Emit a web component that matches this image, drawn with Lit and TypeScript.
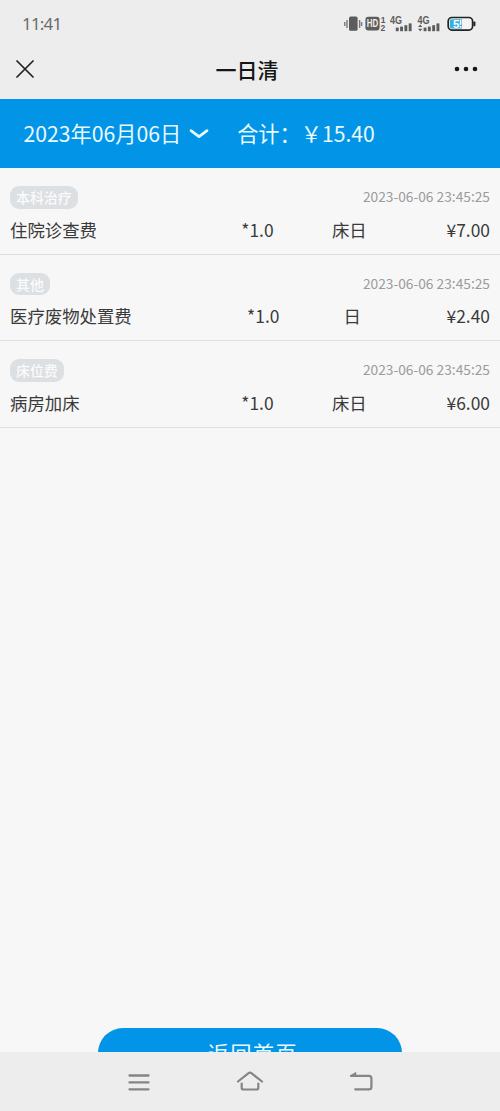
import { LitElement, html, css, svg } from "lit";
import { customElement, property } from "lit/decorators.js";

interface Charge {
  category: string;
  time: string;
  name: string;
  quantity: string;
  unit: string;
  price: string;
}

const CHARGES: Charge[] = [
  { category: "本科治疗", time: "2023-06-06 23:45:25", name: "住院诊查费", quantity: "*1.0", unit: "床日", price: "¥7.00" },
  { category: "其他", time: "2023-06-06 23:45:25", name: "医疗废物处置费", quantity: "*1.0", unit: "日", price: "¥2.40" },
  { category: "床位费", time: "2023-06-06 23:45:25", name: "病房加床", quantity: "*1.0", unit: "床日", price: "¥6.00" },
];

@customElement("status-bar")
class StatusBar extends LitElement {
  static styles = css`
    :host {
      display: flex;
      justify-content: space-between;
      align-items: center;
      height: 48px;
      padding: 0 22px;
      box-sizing: border-box;
      color: #6a6a6a;
    }
    .clock {
      font: 400 17px/24px "Noto Sans", "Noto Sans CJK SC", sans-serif;
      letter-spacing: -0.8px;
    }
    .icons {
      display: block;
      margin-right: 1px;
    }
    .label {
      font-family: "Liberation Sans", sans-serif;
      font-weight: 700;
    }
  `;

  private bars(x: number) {
    return svg`
      <rect x=${x} y="17.6" width="2.9" height="3.6" />
      <rect x=${x + 4.3} y="16.6" width="2.9" height="4.6" />
      <rect x=${x + 8.6} y="15.2" width="2.9" height="6" />
      <rect x=${x + 12.9} y="13.4" width="2.9" height="7.8" />`;
  }

  render() {
    return html`
      <span class="clock">11:41</span>
      <svg class="icons" width="133" height="28" viewBox="0 0 133 28" fill="#5c5c5c">
        <rect x="5" y="6.600" width="8.600" height="14.200" rx="1.600" />
        <path d="M3 10v8M15.600 10v8M.8 12v4M17.600 12v4" stroke="#777" stroke-width="1.400" fill="none" />
        <rect x="21.400" y="6.800" width="14.200" height="13.800" rx="3" />
        <text class="label" x="22.800" y="17.400" font-size="10.500" textLength="11.400" lengthAdjust="spacingAndGlyphs" fill="#eee">HD</text>
        <text class="label" x="36.800" y="12.600" font-size="8.500">1</text>
        <text class="label" x="36.400" y="21" font-size="8.500">2</text>
        <text class="label" x="46" y="13.600" font-size="10" textLength="12" lengthAdjust="spacingAndGlyphs">4G</text>
        ${this.bars(51.8)}
        <text class="label" x="73.600" y="13.600" font-size="10" textLength="12" lengthAdjust="spacingAndGlyphs">4G</text>
        <path d="M74 17l2.200-2.400 2.200 2.400zM74 18.800l2.200 2.400 2.200-2.400z" />
        ${this.bars(79.6)}
        <rect x="104.200" y="7.500" width="24.400" height="12.600" rx="3.800" fill="#f4f4f4" stroke="#222" stroke-width="1.700" />
        <path d="M107.500 9.200H118v9.200h-10.500a1.600 1.600 0 0 1-1.600-1.600v-6a1.600 1.600 0 0 1 1.600-1.600z" fill="#35aee2" />
        <rect x="129.400" y="11.400" width="2" height="4.800" rx=".8" fill="#222" />
        <text class="label" x="109" y="17.700" font-size="11.500" fill="#fff">5</text>
        <path d="M116.600 10v4.800M116.600 16v1.700" stroke="#fff" stroke-width="1.500" />
      </svg>
    `;
  }
}

@customElement("title-bar")
class TitleBar extends LitElement {
  @property() heading = "";

  static styles = css`
    :host {
      display: grid;
      grid-template-columns: 60px 1fr 60px;
      align-items: center;
      height: 51px;
      padding: 0 16px;
      box-sizing: border-box;
    }
    .heading {
      margin: 0 0 10px -6px;
      text-align: center;
      font-size: 21px;
      line-height: 30px;
      font-weight: 500;
      color: #161616;
    }
    .icon {
      display: block;
      margin-bottom: 9px;
    }
    .more {
      justify-self: end;
      margin-right: 6px;
    }
  `;

  render() {
    return html`
      <svg class="icon" width="18" height="18" viewBox="0 0 18 18">
        <path d="M1 1l16 16M17 1L1 17" stroke="#222" stroke-width="1.7" stroke-linecap="round" />
      </svg>
      <h1 class="heading">${this.heading}</h1>
      <svg class="icon more" width="24" height="6" viewBox="0 0 24 6" fill="#161616">
        <circle cx="3" cy="3" r="2.3" />
        <circle cx="12" cy="3" r="2.3" />
        <circle cx="21" cy="3" r="2.3" />
      </svg>
    `;
  }
}

@customElement("charge-row")
class ChargeRow extends LitElement {
  @property({ attribute: false }) charge!: Charge;

  static styles = css`
    :host {
      display: block;
      height: 86.7px;
      padding: 18px 10px 0;
      box-sizing: border-box;
      border-bottom: 1px solid #e0e0e0;
    }
    .line {
      display: flex;
      justify-content: space-between;
      align-items: flex-start;
    }
    .tag {
      padding: 0 6px;
      border-radius: 9px;
      background: #dce0e3;
      color: #fbfbfb;
      font-size: 13.9px;
      line-height: 22.5px;
      font-weight: 500;
    }
    .time {
      color: #9b9b9b;
      font-size: 13.75px;
      line-height: 21px;
    }
    .detail {
      margin-top: 8px;
      color: #3a3a3a;
      font-size: 17.4px;
      line-height: 26px;
    }
    .name {
      width: 173px;
    }
    .price {
      width: 65px;
      text-align: right;
    }
  `;

  render() {
    const c = this.charge;
    return html`
      <div class="line">
        <span class="tag">${c.category}</span>
        <span class="time">${c.time}</span>
      </div>
      <div class="line detail">
        <span class="name">${c.name}</span>
        <span>${c.quantity}</span>
        <span>${c.unit}</span>
        <span class="price">${c.price}</span>
      </div>
    `;
  }
}

@customElement("nav-bar")
class NavBar extends LitElement {
  static styles = css`
    :host {
      display: grid;
      grid-template-columns: repeat(3, 111px);
      justify-content: center;
      justify-items: center;
      height: 59px;
      padding-top: 17.5px;
      box-sizing: border-box;
      background: #ededed;
    }
  `;

  render() {
    return html`
      <svg width="28" height="24" viewBox="0 0 28 24" fill="none" stroke="#858587" stroke-width="2.3" stroke-linecap="round">
        <path d="M4.5 5.5h19M4.5 12.4h19M4.5 19.3h19" />
      </svg>
      <svg width="28" height="24" viewBox="0 0 28 24" fill="none" stroke="#858587" stroke-width="2.2" stroke-linecap="round" stroke-linejoin="round">
        <path d="M2 11.500L12.600 3.200q1.400-1 2.800 0L26 11.500M5.700 13.500v4.200q0 1.800 1.800 1.800h13q1.800 0 1.800-1.800v-4.200" />
      </svg>
      <svg width="28" height="24" viewBox="0 0 28 24" fill="none" stroke="#858587" stroke-width="2.2" stroke-linecap="round" stroke-linejoin="round">
        <path d="M4 5.800h17.800q2.600 0 2.600 2.400v8.700q0 2.400-2.600 2.400H8.200" />
        <path d="M8.600 2.800v3H4z" fill="#858587" stroke-width="1.400" />
      </svg>
    `;
  }
}

@customElement("app-root")
class AppRoot extends LitElement {
  static styles = css`
    :host {
      display: flex;
      flex-direction: column;
      height: 1111px;
      overflow: hidden;
      background: #ededed;
      font-family: "Noto Sans CJK SC", sans-serif;
    }
    .summary {
      display: flex;
      align-items: center;
      height: 69px;
      padding: 0 24px 2px 23.5px;
      box-sizing: border-box;
      background: #0294e6;
      color: #e9faff;
      font-size: 21.2px;
      line-height: 30px;
    }
    .chevron {
      margin: 3px 28px 0 8px;
    }
    .content {
      flex: 1;
      min-height: 0;
      display: flex;
      flex-direction: column;
      justify-content: space-between;
      overflow: hidden;
      background: #f7f7f7;
    }
    .footer {
      height: 24.5px;
      display: flex;
      justify-content: center;
      align-items: flex-start;
    }
    .home {
      flex: none;
      width: 304px;
      height: 50px;
      padding: 0 0 2px 6px;
      border: 0;
      border-radius: 25px;
      background: #0294e6;
      color: #e9faff;
      font: inherit;
      font-size: 21px;
      line-height: 48px;
      letter-spacing: 1.6px;
    }
  `;

  render() {
    return html`
      <status-bar></status-bar>
      <title-bar heading="一日清"></title-bar>
      <div class="summary">
        <span>2023年06月06日</span>
        <svg class="chevron" width="20" height="12" viewBox="0 0 20 12" fill="none">
          <path d="M2 2.6l8 6 8-6" stroke="#e9faff" stroke-width="2.7" stroke-linecap="round" stroke-linejoin="round" />
        </svg>
        <span>合计：￥15.40</span>
      </div>
      <main class="content">
        <div>${CHARGES.map((c) => html`<charge-row .charge=${c}></charge-row>`)}</div>
        <div class="footer"><button class="home">返回首页</button></div>
      </main>
      <nav-bar></nav-bar>
    `;
  }
}
